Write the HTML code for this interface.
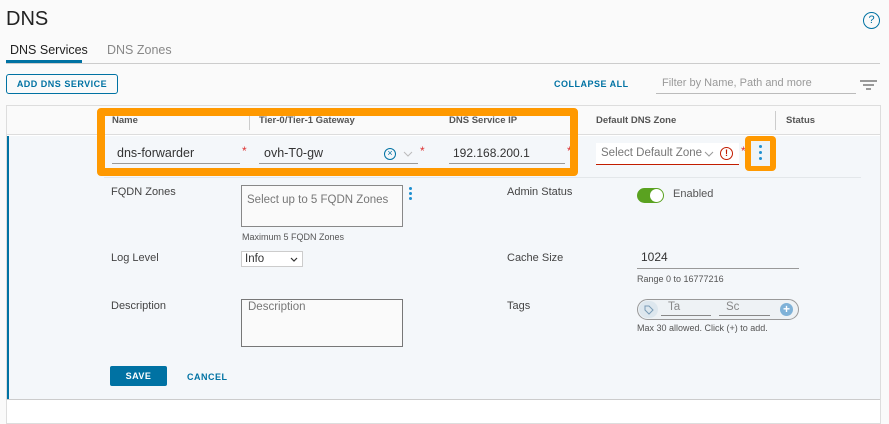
<!DOCTYPE html>
<html><head><style>
*{margin:0;padding:0;box-sizing:border-box}
body{width:889px;height:424px;overflow:hidden;background:#fafafa;font-family:"Liberation Sans",sans-serif;position:relative;color:#333}
.a{position:absolute;white-space:nowrap}
.lbl{font-size:11px;color:#444}
.hd{font-size:9.5px;font-weight:bold;color:#555}
.sm{font-size:9px;color:#555}
</style></head><body>
<div class="a" style="left:6px;top:8px;font-size:20px;color:#222">DNS</div>
<div class="a" style="left:863px;top:12px;width:17px;height:17px;border:1.5px solid #0072a3;border-radius:50%;font-size:11px;color:#0072a3;text-align:center;line-height:14px">?</div>
<div class="a" style="left:10px;top:43px;font-size:12.5px;color:#222">DNS Services</div>
<div class="a" style="left:107px;top:43px;font-size:12.5px;color:#888">DNS Zones</div>
<div class="a" style="left:6px;top:60px;width:76px;height:3px;background:#0072a3"></div>
<div class="a" style="left:6px;top:63px;width:874px;height:1px;background:#ccc"></div>
<div class="a" style="left:6px;top:74px;width:112px;height:20px;border:1px solid #0072a3;border-radius:3px;font-size:9px;font-weight:bold;letter-spacing:.5px;color:#0072a3;text-align:center;line-height:18px">ADD DNS SERVICE</div>
<div class="a" style="left:554px;top:79px;font-size:9px;font-weight:bold;letter-spacing:.5px;color:#0072a3">COLLAPSE ALL</div>
<div class="a" style="left:656px;top:74px;width:200px;height:20px;border-bottom:1px solid #bbb;font-size:11px;color:#999;padding:3px 0 0 6px">Filter by Name, Path and more</div>
<div class="a" style="left:860px;top:80px;width:17px;height:1.5px;background:#999"></div>
<div class="a" style="left:863px;top:84px;width:11px;height:1.5px;background:#999"></div>
<div class="a" style="left:866px;top:88px;width:5px;height:1.5px;background:#999"></div>
<!-- table -->
<div class="a" style="left:6px;top:105px;width:875px;height:319px;border:1px solid #ddd;background:#fff"></div>
<div class="a" style="left:7px;top:106px;width:873px;height:29px;background:#fafafa;border-bottom:1px solid #ddd"></div>
<div class="a hd" style="left:112px;top:115px">Name</div>
<div class="a" style="left:249px;top:112px;width:1px;height:18px;background:#ccc"></div>
<div class="a hd" style="left:259px;top:115px">Tier-0/Tier-1 Gateway</div>
<div class="a hd" style="left:449px;top:115px">DNS Service IP</div>
<div class="a hd" style="left:596px;top:115px">Default DNS Zone</div>
<div class="a" style="left:775px;top:111px;width:1px;height:19px;background:#ccc"></div>
<div class="a hd" style="left:786px;top:115px">Status</div>
<div class="a" style="left:7px;top:136px;width:873px;height:264px;background:#f4f7fa;border-bottom:1px solid #ccc"></div>
<div class="a" style="left:7px;top:136px;width:2px;height:263px;background:#0072a3"></div>
<div class="a" style="left:104px;top:177px;width:757px;height:1px;background:#e3e7ea"></div>
<!-- row inputs -->
<div class="a" style="left:112px;top:146px;width:128px;height:18px;border-bottom:1px solid #999;font-size:12.5px;padding-left:5px">dns-forwarder</div>
<div class="a" style="left:242px;top:144px;color:#d33;font-size:12px">*</div>
<div class="a" style="left:259px;top:146px;width:159px;height:18px;border-bottom:1px solid #999;font-size:12.5px;padding-left:5px">ovh-T0-gw</div>
<div class="a" style="left:384px;top:148px;width:12px;height:12px;border:1.5px solid #0072a3;border-radius:50%;font-size:9px;color:#0072a3;text-align:center;line-height:9px">×</div>
<svg class="a" style="left:403px;top:151px" width="10" height="6"><path d="M1 1l4 4 4-4" fill="none" stroke="#bbb"/></svg>
<div class="a" style="left:420px;top:144px;color:#d33;font-size:12px">*</div>
<div class="a" style="left:449px;top:146px;width:116px;height:18px;border-bottom:1px solid #999;font-size:12px;padding-left:4px">192.168.200.1</div>
<div class="a" style="left:567px;top:144px;color:#d33;font-size:12px">*</div>
<div class="a" style="left:596px;top:143px;width:143px;height:22px;background:#fff;border-bottom:1px solid #c21d00;font-size:11.5px;color:#777;padding:4px 0 0 5px">Select Default Zone</div>
<svg class="a" style="left:704px;top:151px" width="10" height="6"><path d="M1 1l4 4 4-4" fill="none" stroke="#999"/></svg>
<div class="a" style="left:720px;top:147px;width:13px;height:13px;border:1.5px solid #c21d00;border-radius:50%;font-size:9px;font-weight:bold;color:#c21d00;text-align:center;line-height:10px">!</div>
<div class="a" style="left:741px;top:144px;color:#d33;font-size:12px">*</div>
<!-- orange -->
<div class="a" style="left:97px;top:108px;width:481px;height:68px;border:8px solid #f90;border-radius:4px"></div>
<div class="a" style="left:745px;top:136px;width:31px;height:35px;background:#f90;border-radius:4px"></div>
<div class="a" style="left:751px;top:141px;width:19px;height:25px;background:#eef3f7"></div>
<div class="a" style="left:759px;top:145px;width:3px;height:3px;background:#1d8fd0;border-radius:50%;box-shadow:0 6px 0 #1d8fd0,0 12px 0 #1d8fd0"></div>
<!-- details -->
<div class="a lbl" style="left:111px;top:186px">FQDN Zones</div>
<div class="a" style="left:241px;top:185px;width:162px;height:42px;border:1px solid #888;background:#fafafa;font-size:11.5px;color:#777;padding:8px 0 0 5px">Select up to 5 FQDN Zones</div>
<div class="a" style="left:409px;top:187px;width:3px;height:3px;background:#1d8fd0;border-radius:50%;box-shadow:0 5px 0 #1d8fd0,0 10px 0 #1d8fd0"></div>
<div class="a sm" style="left:242px;top:232px">Maximum 5 FQDN Zones</div>
<div class="a lbl" style="left:111px;top:252px">Log Level</div>
<div class="a" style="left:241px;top:251px;width:62px;height:16px;border:1px solid #ccc;background:#fff;font-size:11.5px;padding-left:3px;line-height:14px">Info</div>
<svg class="a" style="left:290px;top:257px" width="8" height="5"><path d="M1 1l3 3 3-3" fill="none" stroke="#333" stroke-width="1.2"/></svg>
<div class="a lbl" style="left:111px;top:300px">Description</div>
<div class="a" style="left:241px;top:299px;width:162px;height:48px;border:1px solid #777;background:#fafafa;font-size:11.5px;color:#777;padding:1px 0 0 6px">Description</div>
<div class="a" style="left:110px;top:366px;width:57px;height:20px;background:#0072a3;border-radius:2px;color:#fff;font-size:9px;font-weight:bold;letter-spacing:.5px;text-align:center;line-height:20px">SAVE</div>
<div class="a" style="left:187px;top:372px;font-size:9px;font-weight:bold;letter-spacing:.5px;color:#0072a3">CANCEL</div>
<div class="a lbl" style="left:507px;top:186px">Admin Status</div>
<div class="a" style="left:637px;top:188px;width:27px;height:15px;background:#5aa220;border-radius:8px"></div>
<div class="a" style="left:650px;top:189px;width:13px;height:13px;background:#fff;border-radius:50%"></div>
<div class="a lbl" style="left:673px;top:188px;color:#555">Enabled</div>
<div class="a lbl" style="left:507px;top:252px">Cache Size</div>
<div class="a" style="left:637px;top:250px;width:162px;height:19px;border-bottom:1px solid #999;font-size:12px;padding-left:4px">1024</div>
<div class="a sm" style="left:637px;top:274px">Range 0 to 16777216</div>
<div class="a lbl" style="left:507px;top:300px">Tags</div>
<div class="a" style="left:637px;top:299px;width:162px;height:21px;border:1.5px solid #999;border-radius:11px;background:#eef2f5"></div>
<div class="a" style="left:639px;top:301px;width:19px;height:17px;border-radius:9px;background:#dde7ee"></div>
<svg class="a" style="left:643px;top:304px" width="11" height="11"><path d="M2 2h4l4 4-4 4-4-4z" fill="none" stroke="#7a9bb5"/></svg>
<div class="a" style="left:661px;top:301px;width:50px;height:15px;border-bottom:1px solid #888;font-size:11.5px;color:#888;padding-left:7px">Ta</div>
<div class="a" style="left:719px;top:301px;width:51px;height:15px;border-bottom:1px solid #888;font-size:11.5px;color:#888;padding-left:7px">Sc</div>
<div class="a" style="left:780px;top:303px;width:13px;height:13px;border-radius:50%;background:#7fb2d8;color:#fff;font-size:12px;font-weight:bold;text-align:center;line-height:13px">+</div>
<div class="a sm" style="left:637px;top:323px">Max 30 allowed. Click (+) to add.</div>
</body></html>
